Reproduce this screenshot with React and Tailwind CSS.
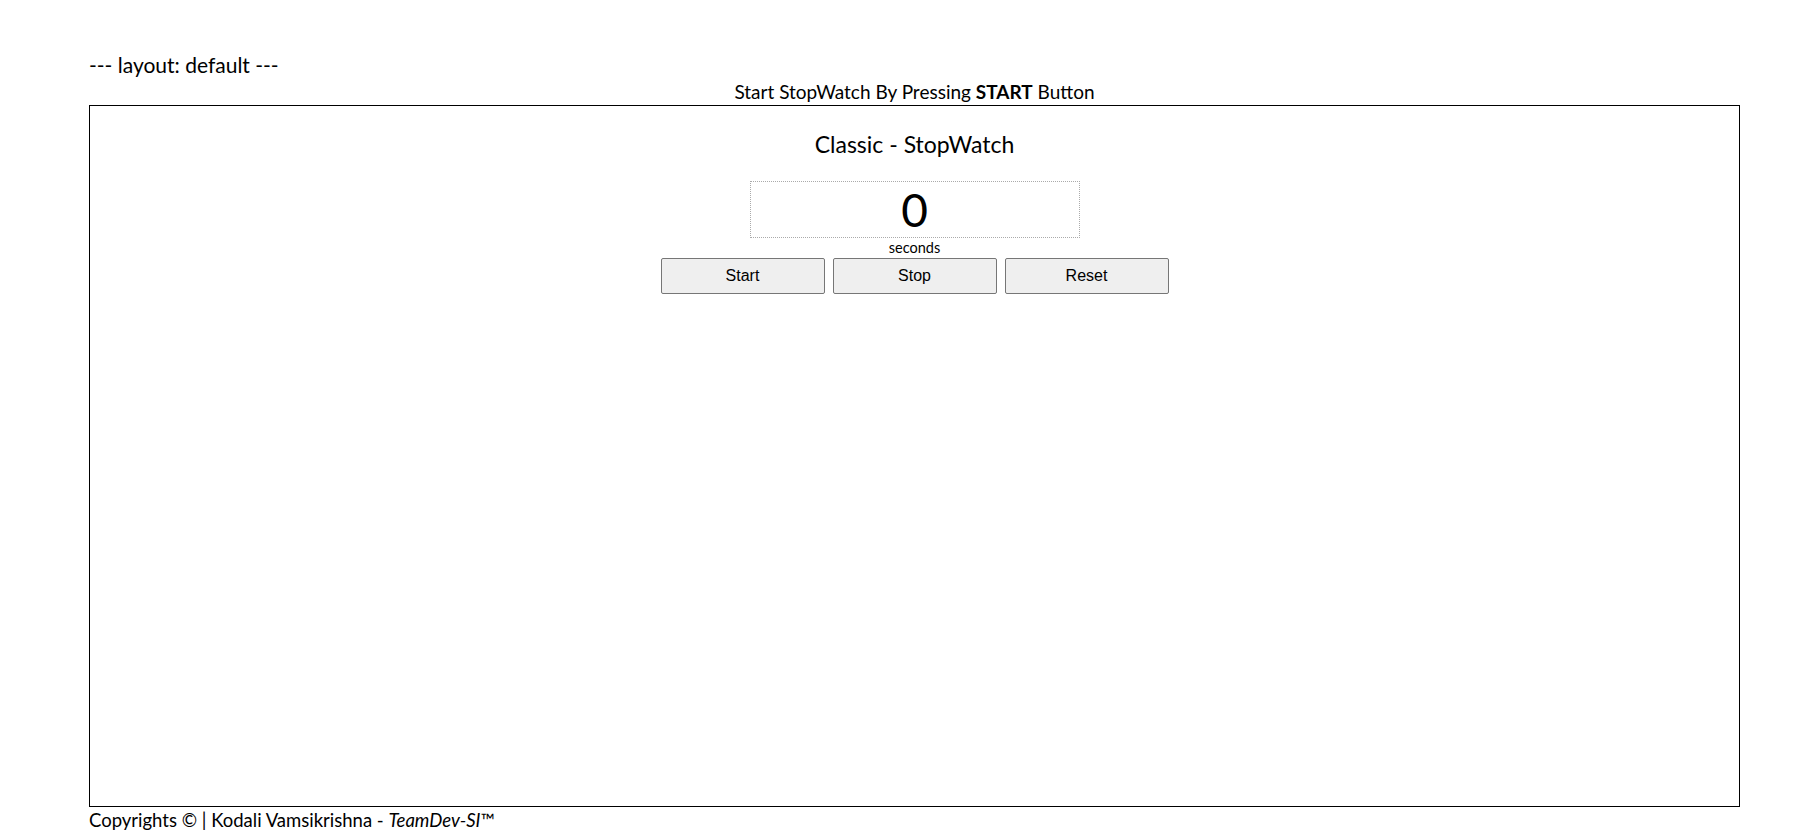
export default function App() {
  return (
    <div className="min-h-[840px] bg-white text-black pl-[89px] pr-[62px] pt-[51px] font-['Lato','Open_Sans',sans-serif]">
      <div className="text-[21px] leading-[27px]">--- layout: default ---</div>
      <div className="text-center text-[19px] leading-[27px]">
        Start StopWatch By Pressing <b>START</b> Button
      </div>
      <div className="h-[702px] border border-black flex flex-col items-center">
        <h3 className="mt-[23px] text-[23px] leading-[30px]">Classic - StopWatch</h3>
        <div className="mt-[22px] w-[330px] h-[57px] border border-dotted border-[#aaa] flex items-center justify-center">
          <span className="text-[46px] leading-none">0</span>
        </div>
        <div className="text-[14.5px] leading-[17px] mt-[1px]">seconds</div>
        <div className="flex gap-[8px] mt-[2px] font-['Liberation_Sans',Arial,sans-serif]">
          <button className="w-[164px] h-[36px] bg-[#efefef] border border-[#767676] rounded-[2px] text-[16px]">Start</button>
          <button className="w-[164px] h-[36px] bg-[#efefef] border border-[#767676] rounded-[2px] text-[16px]">Stop</button>
          <button className="w-[164px] h-[36px] bg-[#efefef] border border-[#767676] rounded-[2px] text-[16px]">Reset</button>
        </div>
      </div>
      <div className="text-[18.5px] leading-[26px]">
        Copyrights © | Kodali Vamsikrishna - <i>TeamDev-SI</i>™
      </div>
    </div>
  );
}
